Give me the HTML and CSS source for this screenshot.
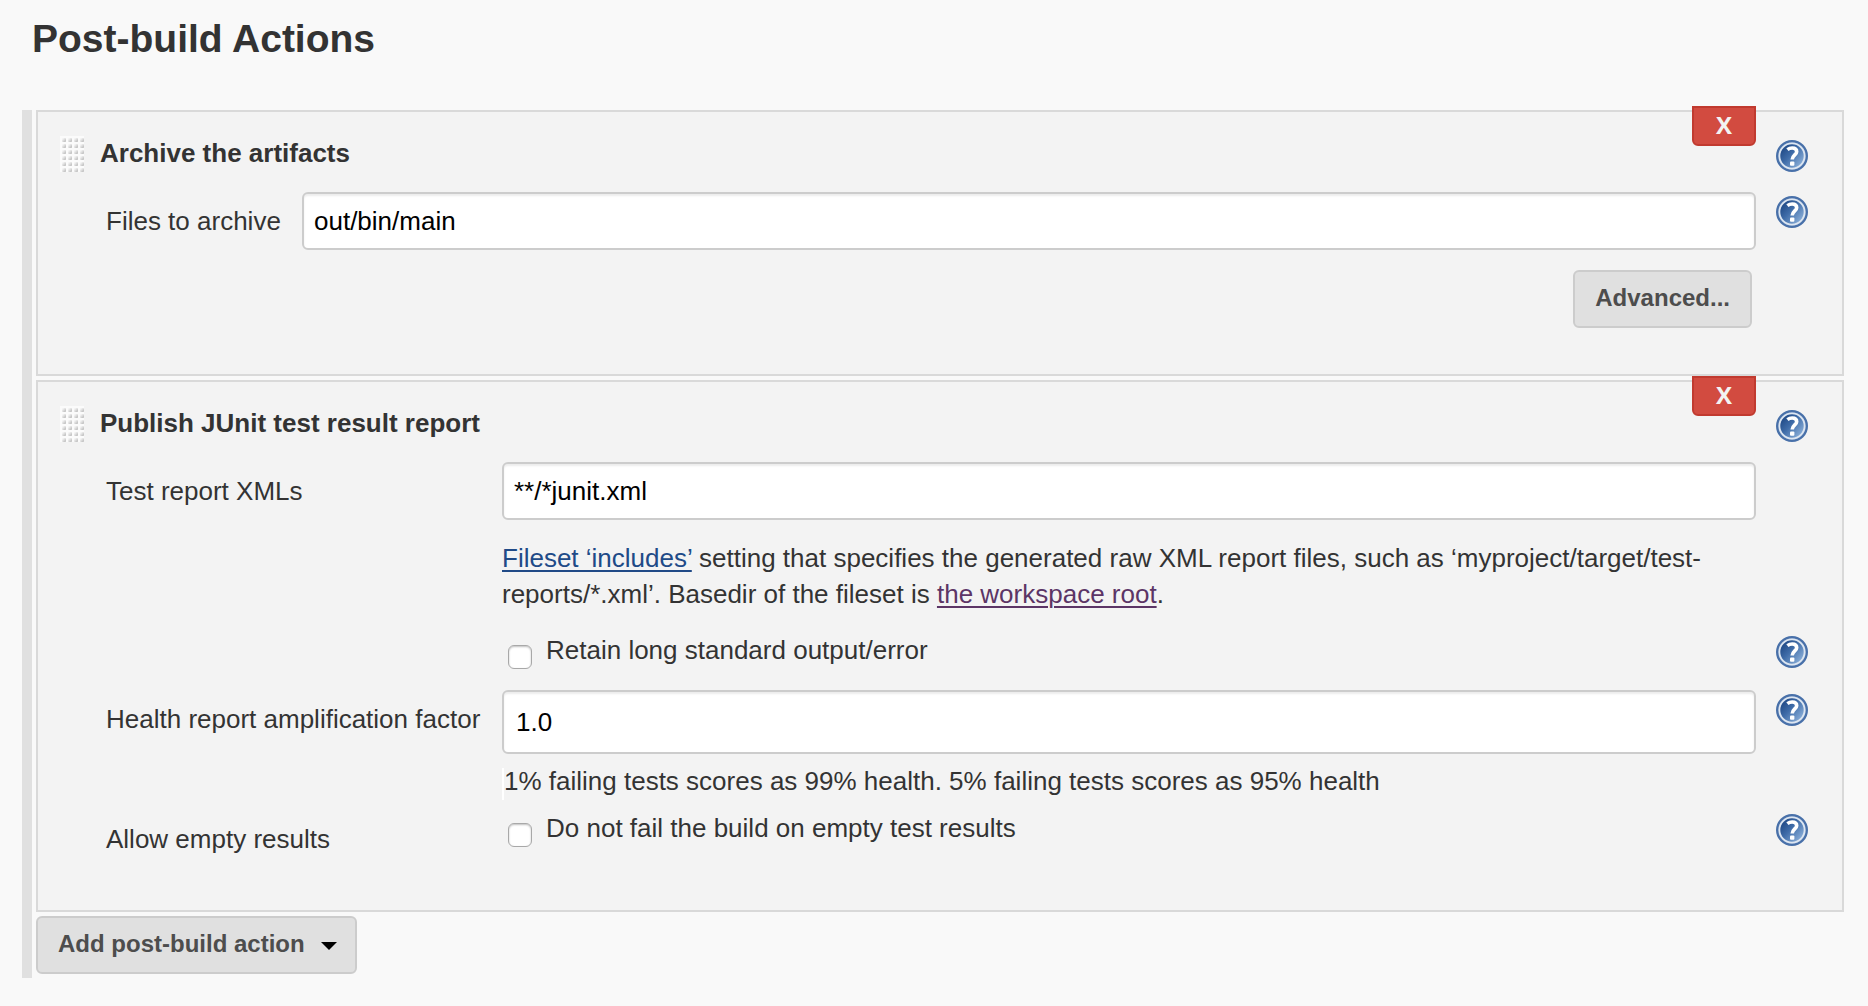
FILE: index.html
```
<!DOCTYPE html>
<html lang="en">
<head>
<meta charset="utf-8">
<title>Post-build Actions</title>
<link rel="stylesheet" href="styles.css">
</head>
<body>
<svg class="defs" width="0" height="0" aria-hidden="true">
  <defs>
    <linearGradient id="help-fill" x1="0.1" y1="0.2" x2="0.9" y2="0.9">
      <stop offset="0" stop-color="#204a87"/>
      <stop offset="0.4" stop-color="#3f6ca8"/>
      <stop offset="1" stop-color="#8fb3dc"/>
    </linearGradient>
    <linearGradient id="dot-fill" x1="0" y1="0" x2="1" y2="1">
      <stop offset="0.2" stop-color="#f4f4f4"/>
      <stop offset="1" stop-color="#b4b4b4"/>
    </linearGradient>
    <pattern id="grip-dots" width="6" height="6" patternUnits="userSpaceOnUse">
      <rect width="6" height="6" fill="#fbfbfb"/>
      <rect x="2" y="2" width="4" height="4" rx="1" fill="url(#dot-fill)"/>
    </pattern>
    <symbol id="help" viewBox="0 0 32 32">
      <circle cx="16" cy="16" r="14.900" fill="#7f9dc6" stroke="#4870a9" stroke-width="2.200"/>
      <circle cx="16" cy="16" r="12.600" fill="url(#help-fill)" stroke="#dde6f1" stroke-width="1.800"/>
      <path d="M11.400 9.600C13 8.400 14.600 8 16.200 8C19 8 20.700 9.500 20.700 11.700C20.700 14.700 16.200 15.300 16.200 19.600" fill="none" stroke="#fff" stroke-width="3.600"/>
      <rect x="14" y="21.500" width="4.400" height="4.300" rx="1" fill="#fff"/>
    </symbol>
    <symbol id="grip" viewBox="0 0 24 36">
      <rect width="24" height="36" fill="url(#grip-dots)"/>
    </symbol>
  </defs>
</svg>
<main class="page">
  <h1 class="page-title">Post-build Actions</h1>
  <form class="actions">
    <section class="panel">
      <button class="delete" type="button">X</button>
      <header class="panel-head">
        <svg class="grip" aria-hidden="true"><use href="#grip"/></svg>
        <h2 class="panel-title">Archive the artifacts</h2>
        <a class="help" href="#" aria-label="Help"><svg class="help-icon"><use href="#help"/></svg></a>
      </header>
      <div class="fields fields-narrow">
        <label class="label" for="artifacts">Files to archive</label>
        <input class="text-input" id="artifacts" type="text" value="out/bin/main">
        <a class="help" href="#" aria-label="Help"><svg class="help-icon"><use href="#help"/></svg></a>
        <div class="more"><button class="button" type="button">Advanced...</button></div>
      </div>
    </section>
    <section class="panel">
      <button class="delete" type="button">X</button>
      <header class="panel-head">
        <svg class="grip" aria-hidden="true"><use href="#grip"/></svg>
        <h2 class="panel-title">Publish JUnit test result report</h2>
        <a class="help" href="#" aria-label="Help"><svg class="help-icon"><use href="#help"/></svg></a>
      </header>
      <div class="fields fields-wide">
        <label class="label" for="reports">Test report XMLs</label>
        <input class="text-input" id="reports" type="text" value="**/*junit.xml">
        <p class="description"><a class="link" href="#">Fileset ‘includes’</a> setting that specifies the generated raw XML report files, such as ‘myproject/target/test-reports/*.xml’. Basedir of the fileset is <a class="link link-visited" href="#">the workspace root</a>.</p>
        <div class="check">
          <input class="checkbox" id="retain" type="checkbox">
          <label for="retain">Retain long standard output/error</label>
        </div>
        <a class="help" href="#" aria-label="Help"><svg class="help-icon"><use href="#help"/></svg></a>
        <label class="label" for="factor">Health report amplification factor</label>
        <input class="text-input text-input-tall" id="factor" type="text" value="1.0">
        <a class="help" href="#" aria-label="Help"><svg class="help-icon"><use href="#help"/></svg></a>
        <p class="result">1% failing tests scores as 99% health. 5% failing tests scores as 95% health</p>
        <span class="label" id="empty-label">Allow empty results</span>
        <div class="check">
          <input class="checkbox" id="empty" type="checkbox" aria-describedby="empty-label">
          <label for="empty">Do not fail the build on empty test results</label>
        </div>
        <a class="help" href="#" aria-label="Help"><svg class="help-icon"><use href="#help"/></svg></a>
      </div>
    </section>
    <button class="button button-menu" type="button">Add post-build action
      <svg class="caret" viewBox="0 0 16 8" aria-hidden="true"><path d="M0 0H16L8 8Z"/></svg>
    </button>
  </form>
</main>
</body>
</html>
```
FILE: styles.css
```
* {
  box-sizing: border-box;
}

body {
  margin: 0;
  background: #f9f9f9;
  color: #333;
  font: 26px/36px "Liberation Sans", Arial, sans-serif;
}

.defs {
  position: absolute;
}

.page {
  padding: 16px 24px 28px 22px;
}

.page-title {
  margin: 0 0 48px 10px;
  font-size: 39px;
  line-height: 46px;
}

.actions {
  display: flex;
  flex-direction: column;
  align-items: stretch;
  gap: 4px;
  padding: 0 0 4px 4px;
  border-left: 10px solid #e0e0e0;
}

.panel {
  position: relative;
  padding: 0 34px 46px 22px;
  border: 2px solid #d9d9d9;
  background: #f3f3f3;
}

.panel + .panel {
  padding-bottom: 42px;
}

.delete {
  position: absolute;
  top: -6px;
  right: 86px;
  width: 64px;
  height: 40px;
  padding: 0 0 2px;
  border: 2px solid #c13a2f;
  border-radius: 0 0 6px 6px;
  background: #d24b40;
  color: #f3f3f3;
  font: bold 24px/34px "Open Sans", sans-serif;
}

.panel-head {
  display: flex;
  align-items: flex-start;
  height: 80px;
  padding-top: 24px;
}

.grip {
  width: 24px;
  height: 36px;
  margin-right: 16px;
}

.panel-title {
  flex: 1;
  margin: 0;
  font-size: 26px;
  line-height: 34px;
}

.panel-head .help {
  margin-top: 4px;
}

.help-icon {
  display: block;
  width: 32px;
  height: 32px;
}

.fields {
  display: grid;
  column-gap: 20px;
  align-items: start;
  padding-left: 46px;
}

.fields-narrow {
  grid-template-columns: 176px 1fr 32px;
}

.fields-wide {
  grid-template-columns: 376px 1fr 32px;
}

.label {
  grid-column: 1;
  padding-top: 11px;
}

.text-input {
  grid-column: 2;
  width: 100%;
  height: 58px;
  padding: 0 10px;
  border: 2px solid #ccc;
  border-radius: 6px;
  background: #fff;
  box-shadow: inset 0 2px 2px rgba(0, 0, 0, 0.075);
  color: #000;
  font: inherit;
}

.text-input-tall {
  height: 64px;
  padding: 0 12px;
}

.fields .help {
  grid-column: 3;
  margin-top: 4px;
}

.more {
  grid-column: 2;
  display: flex;
  justify-content: flex-end;
  margin: 20px 4px 0 0;
}

.button {
  height: 58px;
  padding: 0 20px 2px;
  border: 2px solid #ccc;
  border-radius: 6px;
  background: #e0e0e0;
  color: #4d4d4d;
  font: bold 24px/36px "Liberation Sans", Arial, sans-serif;
}

.button-menu {
  display: flex;
  align-items: center;
  align-self: flex-start;
  gap: 16px;
  padding-right: 18px;
}

.caret {
  width: 16px;
  height: 8px;
  margin-top: 4px;
  fill: #000;
}

.description {
  grid-column: 2;
  margin: 20px 0;
}

.link {
  color: #204a87;
  text-decoration-thickness: 2px;
  text-underline-offset: 3px;
}

.link-visited {
  color: #5c3566;
}

.check {
  grid-column: 2;
  display: flex;
  align-items: flex-start;
  gap: 14px;
  height: 58px;
  padding-left: 6px;
}

.checkbox {
  appearance: none;
  width: 24px;
  height: 24px;
  margin: 13px 0 0;
  border: 1px solid #a8a8a8;
  border-radius: 6px;
  background: #fff;
  box-shadow: inset 0 1px 2px rgba(0, 0, 0, 0.25);
}

.result {
  grid-column: 2;
  height: 32px;
  margin: 14px 0 10px;
  border-left: 2px solid #fff;
  line-height: 26px;
}
```
